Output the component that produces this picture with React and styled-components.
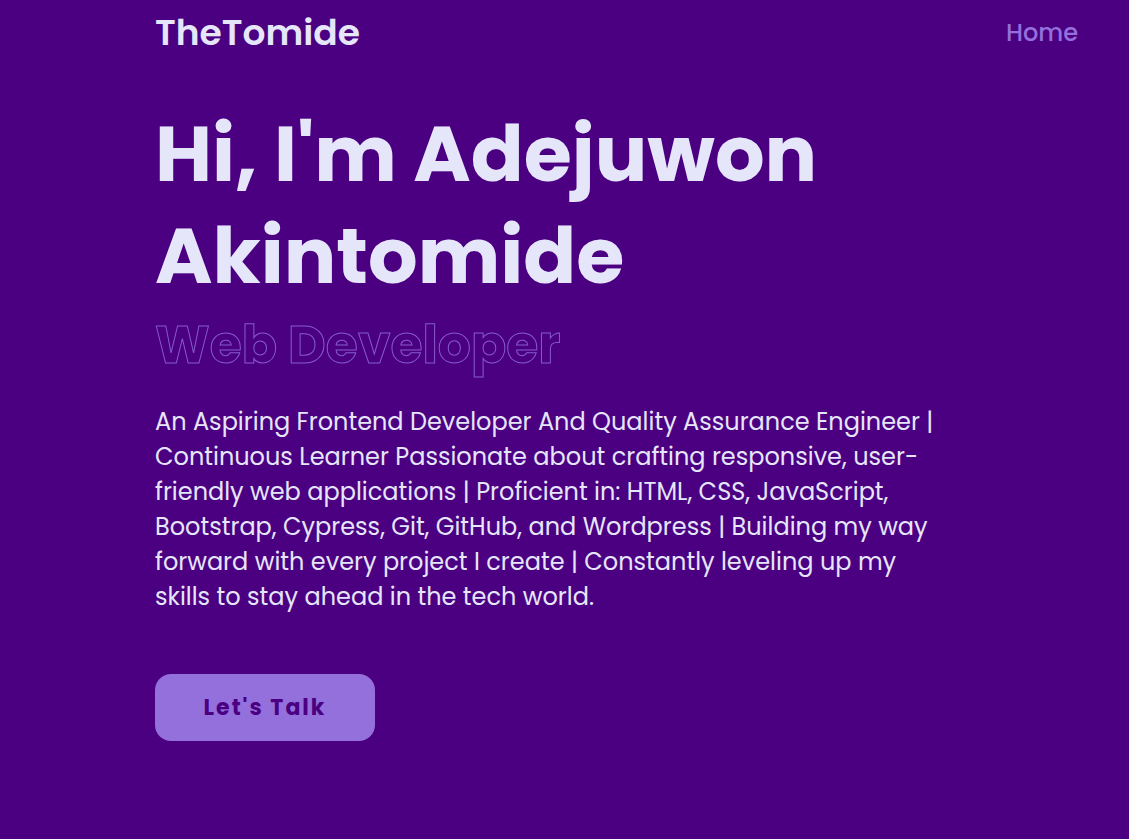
import React from 'react';
import styled, { createGlobalStyle } from 'styled-components';

const GlobalStyle = createGlobalStyle`
  *, *::before, *::after { box-sizing: border-box; }
  body {
    margin: 0;
    background: #4b0082;
    color: #e6e6fa;
    font-family: Poppins, Inter, "Open Sans", sans-serif;
  }
`;

const Header = styled.header`
  display: flex;
  align-items: center;
  justify-content: space-between;
  padding: 8px 51px 8px 155px;
`;

const Logo = styled.a`
  color: #e6e6fa;
  font-size: 36px;
  font-weight: 600;
  line-height: 50px;
  text-decoration: none;
`;

const NavLink = styled.a`
  color: #9370db;
  font-size: 24px;
  font-weight: 500;
  line-height: 50px;
  text-decoration: none;
`;

const Hero = styled.main`
  padding: 37px 155px 98px;
`;

const Title = styled.h1`
  margin: 0;
  max-width: 780px;
  font-size: 78px;
  font-weight: 700;
  line-height: 102px;
`;

const Role = styled.h2`
  margin: 0;
  color: transparent;
  font-size: 52px;
  font-weight: 700;
  line-height: 76px;
  -webkit-text-stroke: 1px rgba(147, 112, 219, 0.8);
`;

const Intro = styled.p`
  margin: 21px 0 60px;
  max-width: 784px;
  font-size: 24px;
  line-height: 35px;
`;

const TalkButton = styled.button`
  min-width: 220px;
  padding: 16px 48px;
  border: 0;
  border-radius: 16px;
  background: #9370db;
  color: #4b0082;
  font: inherit;
  font-size: 22px;
  font-weight: 700;
  line-height: 35px;
  letter-spacing: 2px;
  cursor: pointer;
`;

export default function App() {
  return (
    <>
      <GlobalStyle />
      <Header>
        <Logo href="#home">TheTomide</Logo>
        <nav><NavLink href="#home">Home</NavLink></nav>
      </Header>
      <Hero>
        <Title>Hi, I'm Adejuwon Akintomide</Title>
        <Role>Web Developer</Role>
        <Intro>
          An Aspiring Frontend Developer And Quality Assurance Engineer |
          Continuous Learner Passionate about crafting responsive,
          user-friendly web applications | Proficient in: HTML, CSS,
          JavaScript, Bootstrap, Cypress, Git, GitHub, and Wordpress |
          Building my way forward with every project I create | Constantly
          leveling up my skills to stay ahead in the tech world.
        </Intro>
        <TalkButton type="button">Let's Talk</TalkButton>
      </Hero>
    </>
  );
}
